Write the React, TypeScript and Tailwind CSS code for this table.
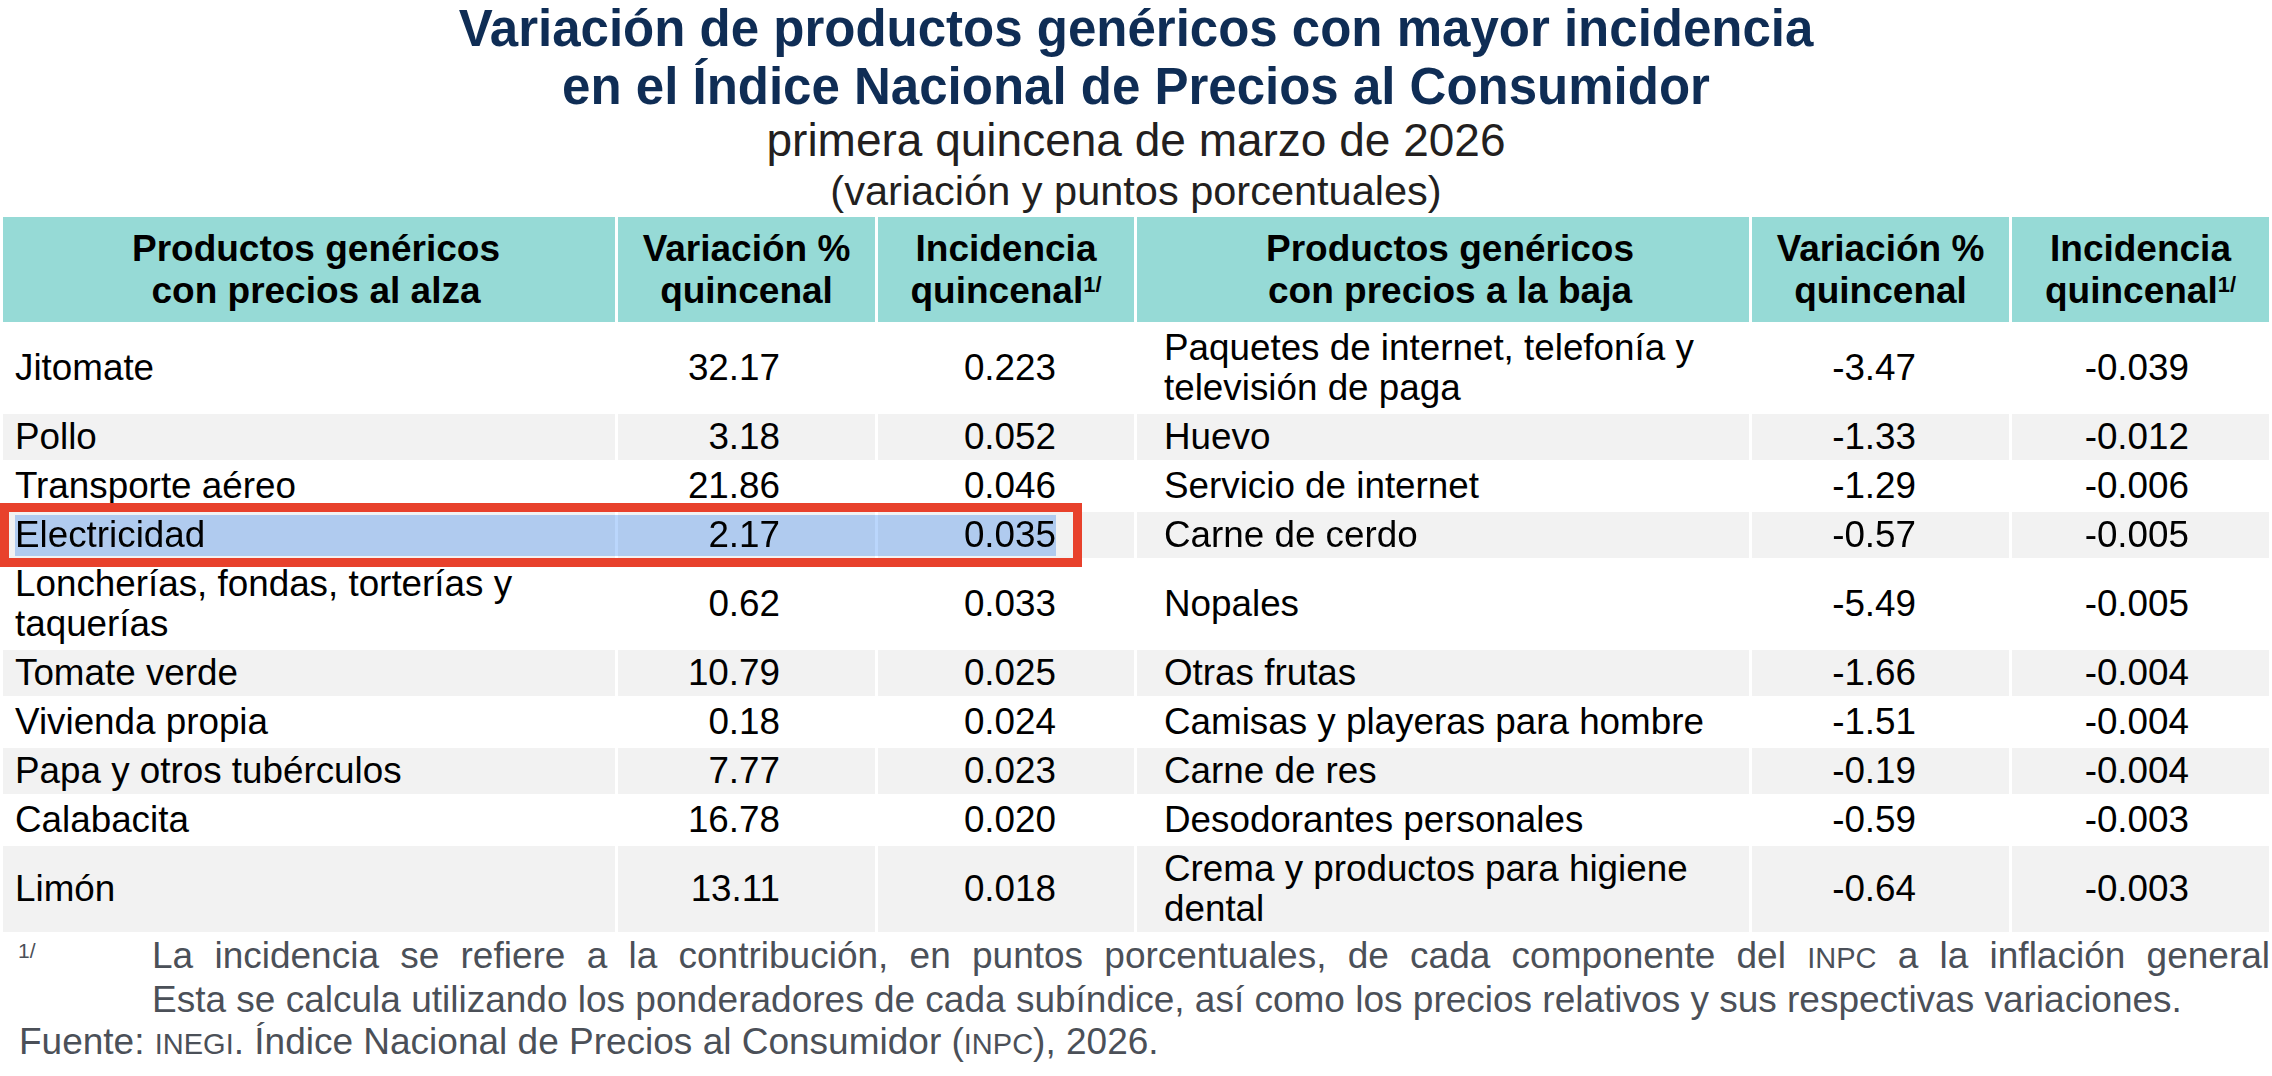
import React from 'react';

interface Item {
  name: string;
  variacion: string;
  incidencia: string;
}

const alza: Item[] = [
  { name: 'Jitomate', variacion: '32.17', incidencia: '0.223' },
  { name: 'Pollo', variacion: '3.18', incidencia: '0.052' },
  { name: 'Transporte aéreo', variacion: '21.86', incidencia: '0.046' },
  { name: 'Electricidad', variacion: '2.17', incidencia: '0.035' },
  { name: 'Loncherías, fondas, torterías y taquerías', variacion: '0.62', incidencia: '0.033' },
  { name: 'Tomate verde', variacion: '10.79', incidencia: '0.025' },
  { name: 'Vivienda propia', variacion: '0.18', incidencia: '0.024' },
  { name: 'Papa y otros tubérculos', variacion: '7.77', incidencia: '0.023' },
  { name: 'Calabacita', variacion: '16.78', incidencia: '0.020' },
  { name: 'Limón', variacion: '13.11', incidencia: '0.018' },
];

const baja: Item[] = [
  { name: 'Paquetes de internet, telefonía y televisión de paga', variacion: '-3.47', incidencia: '-0.039' },
  { name: 'Huevo', variacion: '-1.33', incidencia: '-0.012' },
  { name: 'Servicio de internet', variacion: '-1.29', incidencia: '-0.006' },
  { name: 'Carne de cerdo', variacion: '-0.57', incidencia: '-0.005' },
  { name: 'Nopales', variacion: '-5.49', incidencia: '-0.005' },
  { name: 'Otras frutas', variacion: '-1.66', incidencia: '-0.004' },
  { name: 'Camisas y playeras para hombre', variacion: '-1.51', incidencia: '-0.004' },
  { name: 'Carne de res', variacion: '-0.19', incidencia: '-0.004' },
  { name: 'Desodorantes personales', variacion: '-0.59', incidencia: '-0.003' },
  { name: 'Crema y productos para higiene dental', variacion: '-0.64', incidencia: '-0.003' },
];

// rows whose text wraps onto two lines
const tallRows = [0, 4, 9];

const gridCols = 'grid grid-cols-[612px_257px_256px_612px_257px_257px] gap-[3px]';

function HeaderCell({ children, indent }: { children: React.ReactNode; indent?: boolean }) {
  return (
    <div
      className={`flex flex-col items-center justify-center bg-[#96dad6] text-center font-bold text-[37px] leading-[42px] text-black ${
        indent ? 'pl-[14px]' : ''
      }`}
    >
      {children}
    </div>
  );
}

function Sup() {
  return <sup className="text-[22px] font-bold">1/</sup>;
}

function DataRow({ index }: { index: number }) {
  const a = alza[index];
  const b = baja[index];
  const bg = index % 2 === 1 ? 'bg-[#f2f2f2]' : 'bg-white';
  const height = tallRows.includes(index) ? 'h-[86px]' : 'h-[46px]';
  const highlighted = index === 3;

  return (
    <div
      className={`${gridCols} ${height} text-[36.8px] leading-[40px] text-black ${
        highlighted ? 'relative z-10' : ''
      }`}
    >
      <div className={`${bg} flex items-center pl-[12px] pr-[40px]`}>{a.name}</div>
      <div className={`${bg} flex items-center justify-end pr-[95px]`}>{a.variacion}</div>
      <div className={`${bg} flex items-center justify-end pr-[78px]`}>{a.incidencia}</div>
      <div className={`${bg} flex items-center pl-[27px] pr-[40px]`}>{b.name}</div>
      <div className={`${bg} flex items-center justify-end pr-[93px]`}>{b.variacion}</div>
      <div className={`${bg} flex items-center justify-end pr-[80px]`}>{b.incidencia}</div>

      {highlighted && (
        <>
          <div className="pointer-events-none absolute left-[12px] top-[3px] h-[41px] w-[1041px] bg-[#bad6fc] mix-blend-multiply" />
          <div className="pointer-events-none absolute left-[-3px] top-[-9px] h-[64px] w-[1082px] border-[9px] border-[#e8412c]" />
        </>
      )}
    </div>
  );
}

export default function App() {
  return (
    <div className="w-[2272px] h-[1076px] overflow-hidden bg-white font-['Liberation_Sans',Arial,sans-serif]">
      <div className="text-center">
        <h1 className="text-[51px] leading-[58px] font-bold text-[#0f2d55]">
          Variación de productos genéricos con mayor incidencia
          <br />
          en el Índice Nacional de Precios al Consumidor
        </h1>
        <p className="text-[46px] leading-[48px] text-[#231f20]">primera quincena de marzo de 2026</p>
        <p className="text-[41.5px] leading-[53px] text-[#231f20]">(variación y puntos porcentuales)</p>
      </div>

      <div className="flex flex-col gap-[3px] px-[3px] pb-[3px]">
        <div className={`${gridCols} h-[105px]`}>
          <HeaderCell indent>
            <span>Productos genéricos</span>
            <span>con precios al alza</span>
          </HeaderCell>
          <HeaderCell>
            <span>Variación %</span>
            <span>quincenal</span>
          </HeaderCell>
          <HeaderCell>
            <span>Incidencia</span>
            <span>
              quincenal
              <Sup />
            </span>
          </HeaderCell>
          <HeaderCell indent>
            <span>Productos genéricos</span>
            <span>con precios a la baja</span>
          </HeaderCell>
          <HeaderCell>
            <span>Variación %</span>
            <span>quincenal</span>
          </HeaderCell>
          <HeaderCell>
            <span>Incidencia</span>
            <span>
              quincenal
              <Sup />
            </span>
          </HeaderCell>
        </div>

        {alza.map((_, i) => (
          <DataRow key={i} index={i} />
        ))}
      </div>

      <div className="text-[37px] leading-[42px] text-[#4b5058]">
        <div className="flex">
          <div className="w-[152px] shrink-0 pl-[18px] pt-[5px] text-[21px] leading-[21px]">1/</div>
          <div className="flex-1 pr-[2px]">
            <div className="text-justify [text-align-last:justify]">
              La incidencia se refiere a la contribución, en puntos porcentuales, de cada componente del{' '}
              <span className="text-[29px]">INPC</span> a la inflación general
            </div>
            <div>
              Esta se calcula utilizando los ponderadores de cada subíndice, así como los precios relativos y sus
              respectivas variaciones.
            </div>
          </div>
        </div>
        <div className="pl-[19px]">
          Fuente: <span className="text-[29px]">INEGI</span>. Índice Nacional de Precios al Consumidor (
          <span className="text-[29px]">INPC</span>), 2026.
        </div>
      </div>
    </div>
  );
}
